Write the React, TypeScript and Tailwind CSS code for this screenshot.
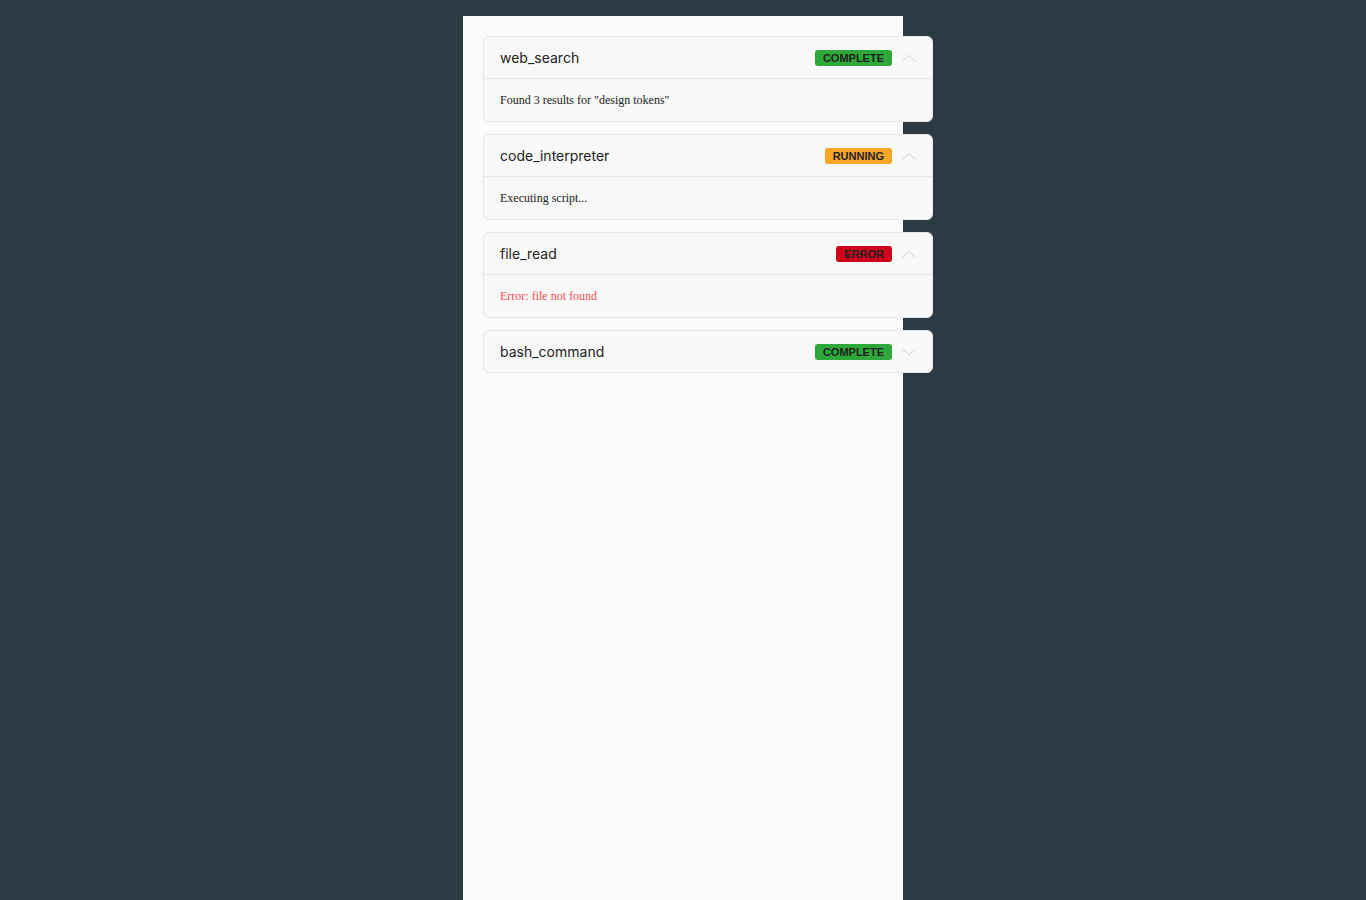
import React from "react";

type Item = { name: string; status: "COMPLETE" | "RUNNING" | "ERROR"; body?: string; open: boolean };

const items: Item[] = [
  { name: "web_search", status: "COMPLETE", body: 'Found 3 results for "design tokens"', open: true },
  { name: "code_interpreter", status: "RUNNING", body: "Executing script...", open: true },
  { name: "file_read", status: "ERROR", body: "Error: file not found", open: true },
  { name: "bash_command", status: "COMPLETE", open: false },
];

function Badge({ status }: { status: Item["status"] }) {
  const cls =
    status === "COMPLETE"
      ? "bg-[#2ea83a]"
      : status === "RUNNING"
      ? "bg-[#f5a623]"
      : "bg-[#d0021b]";
  return (
    <span
      className={`${cls} rounded-[3px] px-2 h-[16px] pt-px flex items-center text-[11px] font-bold leading-none text-[#1f1f1f]`}
      style={{ fontFamily: '"Liberation Sans", Arial, sans-serif' }}
    >
      {status}
    </span>
  );
}

function Chevron({ up }: { up: boolean }) {
  return (
    <svg width="16" height="16" viewBox="0 0 16 16" fill="none" stroke="#e2e2e2" strokeWidth="1.5" strokeLinecap="round" strokeLinejoin="round">
      {up ? <path d="M2 11L8 5.5L14 11" /> : <path d="M2 5.5L8 11L14 5.5" />}
    </svg>
  );
}

export default function App() {
  return (
    <div className="min-h-screen w-full bg-[#2b3a43] flex justify-center pt-4 overflow-hidden">
      <div className="w-[440px] h-[884px] bg-[#fafafa] p-5 flex flex-col gap-3">
        {items.map((it) => (
          <div key={it.name} className="w-[450px] shrink-0 rounded-[6px] border border-[#e6e6e6] bg-[#f9f9f9]">
            <div className="h-[41px] flex items-center pl-4 pr-[15px]">
              <span className="flex-1 text-[14px] text-[#222]" style={{ fontFamily: "Inter, sans-serif" }}>
                {it.name}
              </span>
              <div className="flex items-center gap-[9px]">
                <Badge status={it.status} />
                <Chevron up={it.open} />
              </div>
            </div>
            {it.open && (
              <div
                className={`border-t border-[#e6e6e6] h-[43px] flex items-center px-4 text-[12px] ${
                  it.status === "ERROR" ? "text-[#ff4d4f]" : "text-[#222]"
                }`}
                style={{ fontFamily: '"Liberation Serif", "Times New Roman", serif' }}
              >
                {it.body}
              </div>
            )}
          </div>
        ))}
      </div>
    </div>
  );
}
